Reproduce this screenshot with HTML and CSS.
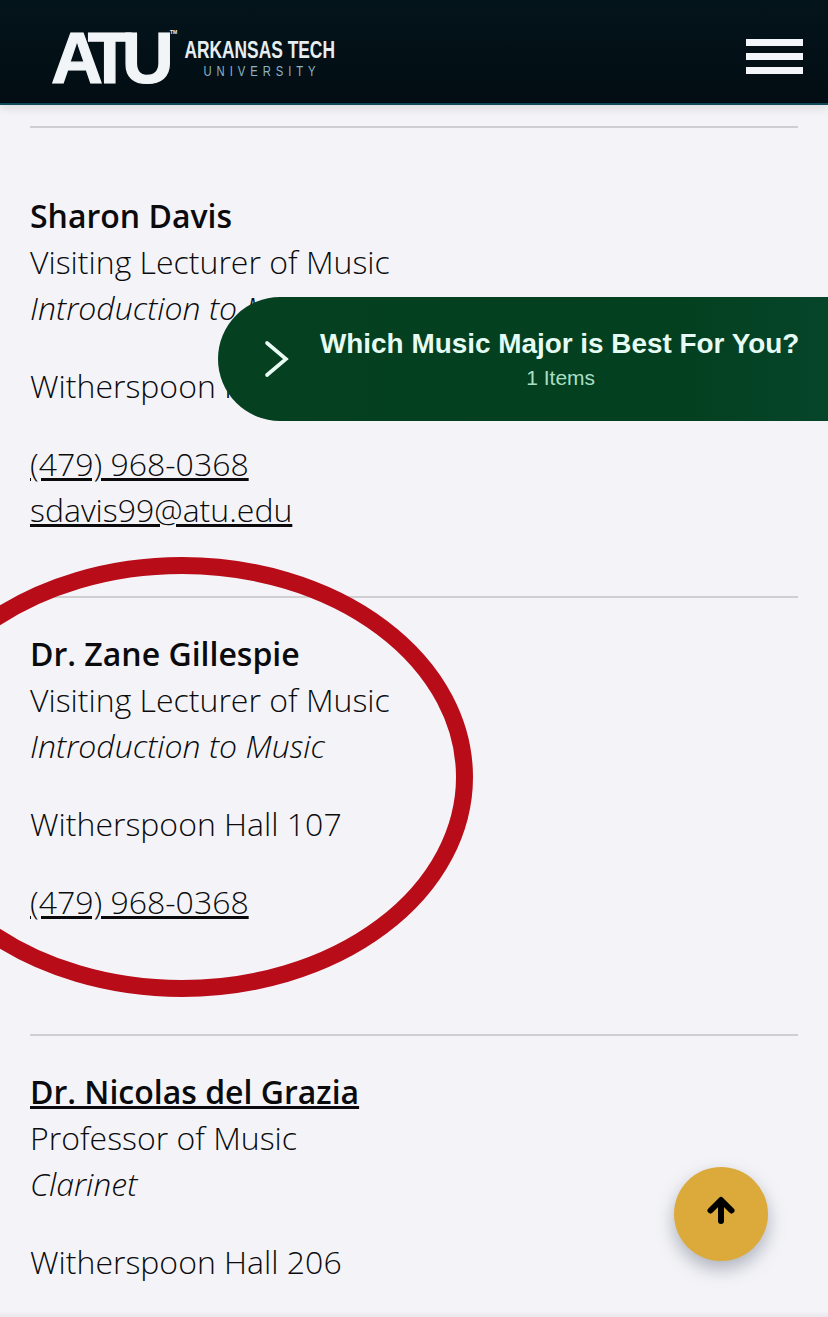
FILE: index.html
```html
<!DOCTYPE html>
<html lang="en">
<head>
<meta charset="utf-8">
<title>Faculty</title>
<link rel="stylesheet" href="styles.css">
</head>
<body>
<header class="topbar">
  <div class="logo">
    <span class="logo-mark">ATU</span>
    <span class="logo-tm">TM</span>
    <div class="logo-words">
      <span class="logo-name">ARKANSAS TECH</span>
      <span class="logo-sub">UNIVERSITY</span>
    </div>
  </div>
  <div class="menu"><span></span><span></span><span></span></div>
</header>
<main class="list">
  <section class="person">
    <p class="lines"><strong>Sharon Davis</strong><br>Visiting Lecturer of Music<br><em>Introduction to Music</em></p>
    <p class="lines">Witherspoon Hall 107</p>
    <p class="lines"><a href="#">(479) 968-0368</a><br><a href="#">sdavis99@atu.edu</a></p>
  </section>
  <section class="person second">
    <p class="lines"><strong>Dr. Zane Gillespie</strong><br>Visiting Lecturer of Music<br><em>Introduction to Music</em></p>
    <p class="lines">Witherspoon Hall 107</p>
    <p class="lines"><a href="#">(479) 968-0368</a></p>
  </section>
  <section class="person third">
    <p class="lines"><a href="#"><strong>Dr. Nicolas del Grazia</strong></a><br>Professor of Music<br><em>Clarinet</em></p>
    <p class="lines">Witherspoon Hall 206</p>
  </section>
</main>
<svg class="circle" width="480" height="460" viewBox="0 0 480 460" aria-hidden="true">
  <ellipse cx="182" cy="230" rx="282.5" ry="211.5" fill="none" stroke="#b80c19" stroke-width="17"/>
</svg>
<aside class="pill">
  <svg class="chev" width="26" height="38" viewBox="0 0 26 38" aria-hidden="true"><path d="M3 3l19 16L3 35" fill="none" stroke="#eafbf3" stroke-width="3.6" stroke-linecap="round" stroke-linejoin="miter"/></svg>
  <div class="pill-text">
    <span class="pill-title">Which Music Major is Best For You?</span>
    <span class="pill-sub">1 Items</span>
  </div>
</aside>
<button class="to-top" type="button" aria-label="Back to top">
  <svg width="30" height="30" viewBox="0 0 30 30" aria-hidden="true"><path d="M15 26V6M4.5 15.5L15 5l10.500 10.500" fill="none" stroke="#000" stroke-width="6" stroke-linecap="round" stroke-linejoin="round"/></svg>
</button>
</body>
</html>
```
FILE: styles.css
```css
* { box-sizing: border-box; }
html, body { margin: 0; height: 100%; }
body {
  background: linear-gradient(#f4f4f8 calc(100% - 6px), #e8e8ec);
  color: #0b0b0d;
  font-family: "Open Sans", "Liberation Sans", sans-serif;
  font-size: 32px;
  font-weight: 300;
  line-height: 46px;
  overflow: hidden;
  position: relative;
}
.topbar {
  height: 105px;
  background: linear-gradient(#04141b, #020d13);
  border-bottom: 2px solid #0f4a58;
  display: flex;
  align-items: center;
  justify-content: space-between;
  padding: 12px 25px 0 51px;
  position: relative;
  box-shadow: 0 4px 8px rgba(120,120,130,.18);
}
.logo { display: flex; align-items: center; color: #f2f5f7; position: relative; }
.logo-mark {
  font-family: "Liberation Sans", sans-serif;
  font-weight: 700;
  font-size: 72px;
  line-height: 60px;
  letter-spacing: -10px;
  width: 124px;
  -webkit-text-stroke: 1.2px #f2f5f7;
}
.logo-tm { position: absolute; left: 119px; top: 1px; font: 700 5px/6px "Liberation Sans", sans-serif; }
.logo-words { display: flex; flex-direction: column; align-items: center; margin: 0 0 0 4.5px; }
.logo-name { font: 700 23px/24px "Liberation Sans", sans-serif; transform: scaleX(.755); white-space: nowrap; margin: 0 -25px; color: #e6eef2; }
.logo-sub { font: 400 15px/15px "Liberation Sans", sans-serif; letter-spacing: 6.6px; color: #8db4c6; transform: scaleX(.75); margin: 1px 0 0 4px; }
.menu { display: flex; flex-direction: column; gap: 7px; margin-top: -2px; }
.menu span { display: block; width: 57px; height: 7px; background: #f2f6fa; }
.list { padding: 21px 30px 0; }
.person { border-top: 2px solid #cfcfd2; padding-top: 65px; }
.person.second { margin-top: 63px; padding-top: 33px; }
.person.third { margin-top: 109px; padding-top: 33px; }
.lines { margin: 0 0 32px; white-space: nowrap; }
strong { font-weight: 600; }
a { color: inherit; }
.circle { position: absolute; left: 0; top: 547px; }
.pill {
  position: absolute;
  left: 218px; top: 297px;
  width: 610px; height: 124px;
  border-radius: 62px 0 0 62px;
  background: linear-gradient(90deg, #054121 0%, #03401f 75%, #06452a 100%);
  display: flex;
  align-items: center;
  padding-left: 46px;
  color: #e6fbf3;
  font-family: "Liberation Sans", sans-serif;
}
.pill-text { display: flex; flex-direction: column; align-items: center; margin-left: 30px; }
.pill-title { font-size: 27.9px; font-weight: 700; line-height: 34px; margin-top: 4px; white-space: nowrap; }
.pill-sub { font-size: 21px; font-weight: 400; line-height: 34px; color: #a9dfc4; margin-left: 2px; }
.to-top {
  position: absolute;
  left: 674px; top: 1167px;
  width: 94px; height: 94px;
  border: 0;
  border-radius: 50%;
  background: #dcaa3b;
  box-shadow: 0 8px 18px rgba(70,80,100,.4);
  display: flex;
  align-items: center;
  justify-content: center;
  padding: 0 0 8px;
}
```
